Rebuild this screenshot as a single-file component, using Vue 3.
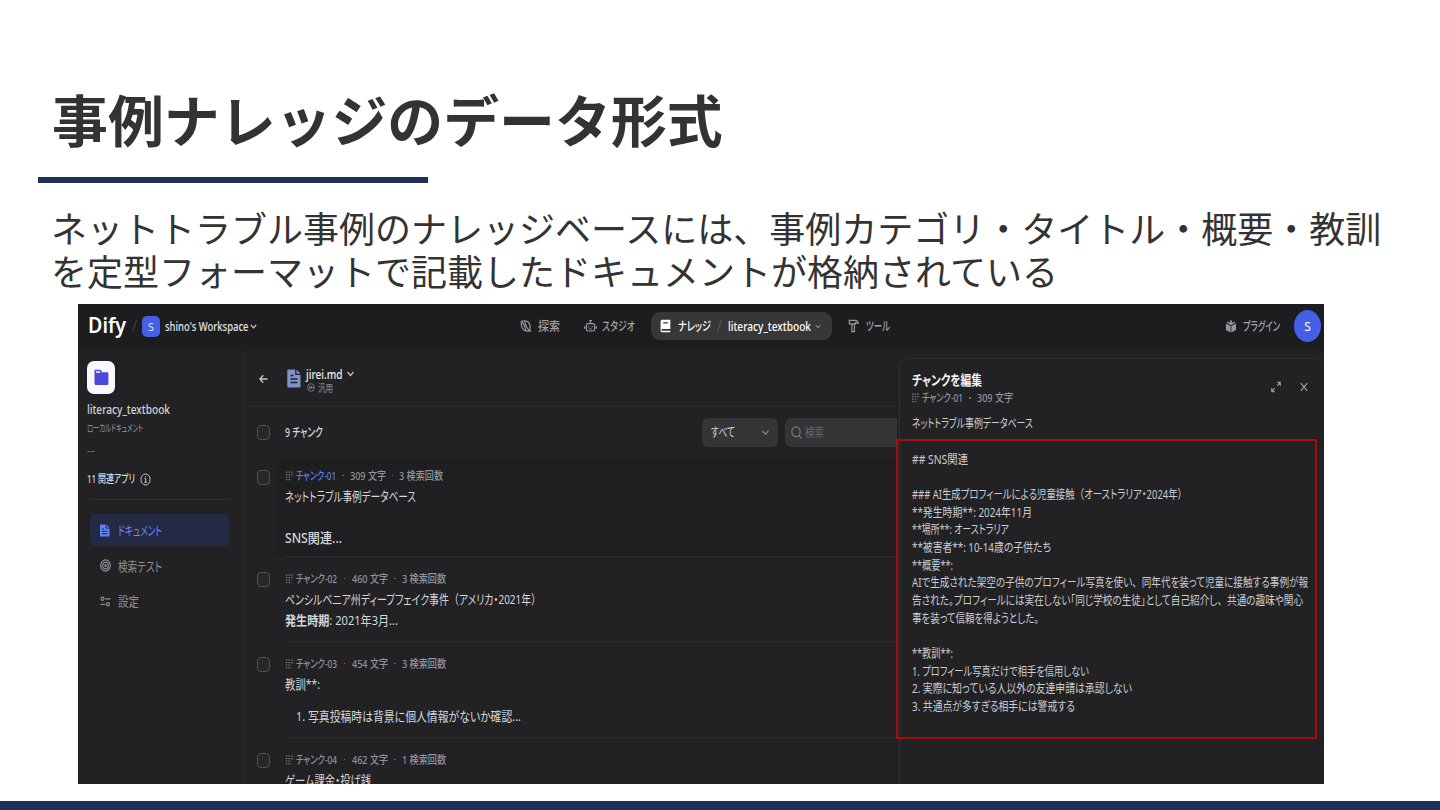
<script setup>
// Condenses a label horizontally so that it occupies exactly the given width.
const vW = {
  mounted(el, { value }) {
    const natural = el.getBoundingClientRect().width
    el.style.transform = `scaleX(${value / natural})`
    el.style.marginRight = `${value - natural}px`
  },
}

// Brackets and commas keep their full-width advance, kana are set proportionally.
const parts = (s) => s.split(/([（）、])/).filter(Boolean)
const isWide = (s) => /^[（）、]$/.test(s)

const chunks = [
  { id: 'チャンク-01', idW: 40, count: '309 文字', hits: '3 検索回数', kind: 'first', active: true },
  { id: 'チャンク-02', idW: 41, count: '460 文字', hits: '3 検索回数', kind: 'second' },
  { id: 'チャンク-03', idW: 41, count: '454 文字', hits: '3 検索回数', kind: 'third' },
  { id: 'チャンク-04', idW: 41, count: '462 文字', hits: '1 検索回数', kind: 'fourth' },
]

const pennsylvania = 'ペンシルベニア州ディープフェイク事件（アメリカ・2021年）'

const lines = [
  ['## SNS関連', 56],
  ['', 0],
  ['### AI生成プロフィールによる児童接触（オーストラリア・2024年）', 275],
  ['**発生時期**: 2024年11月', 120],
  ['**場所**: オーストラリア', 97],
  ['**被害者**: 10-14歳の子供たち', 139],
  ['**概要**:', 41],
  ['AIで生成された架空の子供のプロフィール写真を使い、同年代を装って児童に接触する事例が報', 396],
  ['告された。プロフィールには実在しない「同じ学校の生徒」として自己紹介し、共通の趣味や関心', 391],
  ['事を装って信頼を得ようとした。', 127],
  ['', 0],
  ['**教訓**:', 41],
  ['1. プロフィール写真だけで相手を信用しない', 177],
  ['2. 実際に知っている人以外の友達申請は承認しない', 220],
  ['3. 共通点が多すぎる相手には警戒する', 163],
]
</script>

<template>
  <div class="slide">
    <h1>事例ナレッジのデータ形式</h1>
    <div class="rule"></div>
    <p class="lead">ネットトラブル事例のナレッジベースには、事例カテゴリ・タイトル・概要・教訓<br />を定型フォーマットで記載したドキュメントが格納されている</p>

    <div class="app">
      <header>
        <div class="brand">
          <span v-w="38" class="t logo">Dify</span>
          <i class="slash"></i>
          <span class="ws">S</span>
          <span v-w="83.5" class="t wsname">shino's Workspace</span>
          <svg class="chev" width="7" height="5" viewBox="0 0 7 5"><path d="M.8.8 3.5 3.8 6.2.8" /></svg>
        </div>
        <nav>
          <svg class="ic" width="12" height="14" viewBox="0 0 12 14"><path d="M1.400 2.300c3-.9 6.600-.4 8 2.300 1 2 .7 5.200.3 7.400-3 .5-6.200-.6-7.400-3C1.300 7 1.200 4.500 1.400 2.300ZM1.400 2.300C4 5 5.500 8.500 5.700 11.500M4.800 2c.3 3.500 2.400 7.500 4.900 10H11.500" /></svg>
          <span v-w="22" class="t navt a">探索</span>
          <svg class="ic b" width="13" height="14" viewBox="0 0 13 14"><path d="M4 4.600h5c1 0 1.600.7 1.600 1.700v4c0 1-.6 1.700-1.600 1.700H4c-1 0-1.600-.7-1.600-1.700v-4c0-1 .6-1.700 1.600-1.700ZM6.500 4.600V1.500M5 1.500h3M.7 7.300v2.400M12.300 7.300v2.400M4.800 7.200v1.300M8.200 7.200v1.300M5.300 10h2.400" /></svg>
          <span v-w="33" class="t navt a">スタジオ</span>
          <div class="pill">
            <svg width="11" height="14" viewBox="0 0 11 14"><path fill="#fff" d="M2 .8h8.3v9.3H2.200a.8.8 0 0 0 0 1.600h8.100v1.500H2A1.700 1.700 0 0 1 .6 11.500V2.400C.6 1.400 1.200.8 2 .8Z" /><path d="M3.300 3.800h4.500" stroke="#37373a" stroke-width="1.300" /></svg>
            <span v-w="33" class="t k">ナレッジ</span>
            <i class="slash"></i>
            <span v-w="83" class="t">literacy_textbook</span>
            <svg class="chev dim" width="6" height="5" viewBox="0 0 7 5"><path d="M.8.8 3.500 3.800 6.200.8" /></svg>
          </div>
          <svg class="ic d" width="11" height="14" viewBox="0 0 11 14"><path d="M1.300 1.300H7c2 0 3 1 3.200 3.200L7.400 3.600v1.200H1.300ZM3.900 4.800h2.500v7.800H3.900Z" /></svg>
          <span v-w="24" class="t navt e">ツール</span>
        </nav>
        <div class="right">
          <svg width="12" height="15" viewBox="0 0 12 15"><path fill="#96979d" d="M1 4.500 5.600 7v6.500L1 10.900ZM11 4.500 6.400 7v6.500L11 10.900ZM1.500 3.600 3.200 2.600c.3 1.500 1.600 1.500 2 .2V1.400L6 1l.8.4v1.400c.5 1.300 1.700 1.200 2-.2l1.700 1L6 6.200Z" /></svg>
          <span v-w="37" class="t navt">プラグイン</span>
          <span class="avatar">S</span>
        </div>
      </header>

      <div class="body">
        <aside>
          <div class="folder">
            <svg width="15" height="17" viewBox="0 0 15 17"><path fill="#4a48d8" d="M.5 2C.5 1.200 1 .7 1.700.7h4.500c.6 0 .9.4 1.100 1l.6 1.600h5.200c.8 0 1.300.6 1.300 1.400v9.800c0 .9-.5 1.500-1.300 1.500H1.800c-.8 0-1.300-.6-1.300-1.500Z" /><path fill="#fff" d="M2 2.200h3.800l.7 1.600H2Z" /></svg>
          </div>
          <div class="kb"><span v-w="83" class="t">literacy_textbook</span></div>
          <div class="kind"><span v-w="56" class="t">ローカルドキュメント</span></div>
          <div class="dash"><span v-w="8" class="t">--</span></div>
          <div class="related">
            <span v-w="48" class="t">11 関連アプリ</span>
            <svg width="11" height="13" viewBox="0 0 11 13"><ellipse cx="5.500" cy="6.500" rx="4.600" ry="5.500" /><path d="M4.500 5.700h1.200v3.500M4.300 9.200h2.800M5.500 3.300v1.200" /></svg>
          </div>
          <hr />
          <div class="item on">
            <svg width="10" height="13" viewBox="0 0 10 13"><path fill="#5f81f7" d="M0 .5h5.500v4h4V12.500H0ZM6.500.5l3 3h-3Z" /><path d="M2 5h2M2 7.300h5.500M2 9.700h5.500" stroke="#232a48" stroke-width="1.100" /></svg>
            <span v-w="44" class="t">ドキュメント</span>
          </div>
          <div class="item">
            <svg width="11" height="13" viewBox="0 0 11 13"><g fill="none" stroke="#8b8c92" stroke-width="1.200"><ellipse cx="5.500" cy="6.500" rx="4.800" ry="5.600" /><ellipse cx="5.500" cy="6.500" rx="2.800" ry="3.300" /><ellipse cx="5.500" cy="6.500" rx=".8" ry="1" /></g></svg>
            <span v-w="44" class="t">検索テスト</span>
          </div>
          <div class="item">
            <svg width="11" height="11" viewBox="0 0 11 11"><g fill="none" stroke="#8b8c92" stroke-width="1.200"><ellipse cx="2.500" cy="2.800" rx="1.400" ry="1.600" /><path d="M5 2.800h5.500M.5 8.300h5" /><ellipse cx="8" cy="8.300" rx="1.400" ry="1.600" /></g></svg>
            <span v-w="21" class="t">設定</span>
          </div>
        </aside>

        <main>
          <div class="dochead">
            <svg class="back" width="9" height="10" viewBox="0 0 9 10"><path d="M8.500 5H1M4.200 1.300.9 5l3.300 3.700" /></svg>
            <svg class="doc" width="14" height="19" viewBox="0 0 14 19"><path fill="#7f92c9" d="M1.200.5h7v5.600h5.300v11.300c0 .7-.5 1.100-1 1.100H1.300c-.6 0-1-.5-1-1.100V1.600C.3.9.7.5 1.200.5ZM9.500.5l4 4.300h-4Z" /><path d="M3.500 6.500h3M3.500 10h7M3.500 13.500h7" stroke="#242528" stroke-width="1.500" /></svg>
            <div class="dn">
              <div class="dn1"><span v-w="36.5" class="t">jirei.md</span><svg class="chev" width="7" height="6" viewBox="0 0 7 6"><path d="M.6 1 3.500 4.600 6.400 1" /></svg></div>
              <div class="dn2"><svg width="8" height="9" viewBox="0 0 8 9"><ellipse cx="4" cy="4.500" rx="3.400" ry="3.900" /><path d="M2.700 2.700v3.600M2.700 4.500h4.600M4.700 2.800v3.400" /></svg><span v-w="15" class="t">汎用</span></div>
            </div>
          </div>

          <div class="tools">
            <i class="cb"></i>
            <span v-w="38" class="t total">9 チャンク</span>
            <div class="select"><span v-w="24" class="t">すべて</span><svg class="chev dim" width="7" height="6" viewBox="0 0 7 6"><path d="M.6 1 3.500 4.400 6.400 1" /></svg></div>
            <div class="search"><svg width="11" height="13" viewBox="0 0 11 13"><ellipse cx="5" cy="5.800" rx="4.200" ry="4.900" /><path d="m8 9.500 2.500 2.800" /></svg><span v-w="19" class="t">検索</span></div>
          </div>

          <section v-for="c in chunks" :key="c.id" class="chunk" :class="c.kind">
            <i class="cb"></i>
            <div class="cc">
              <div class="meta" :class="{ active: c.active }">
                <svg class="grip" width="8" height="10" viewBox="0 0 8 10"><path d="M0 1.200h8M0 3.700h8M0 6.200h5.500M0 8.700h5.500" /></svg>
                <span v-w="c.idW" class="t cid">{{ c.id }}</span><i class="dot"></i>
                <span v-w="36" class="t">{{ c.count }}</span><i class="dot"></i>
                <span v-w="44" class="t">{{ c.hits }}</span>
              </div>
              <template v-if="c.kind === 'first'">
                <div class="tx"><span v-w="131" class="t">ネットトラブル事例データベース</span></div>
                <div class="tx sns"><span v-w="57" class="t">SNS関連...</span></div>
              </template>
              <template v-else-if="c.kind === 'second'">
                <div class="tx"><span v-w="256" class="t"><span v-for="(p, k) in parts(pennsylvania)" :key="k" :class="{ wide: isWide(p) }">{{ p }}</span></span></div>
                <div class="tx"><span v-w="113" class="t"><b>発生時期</b>: 2021年3月...</span></div>
              </template>
              <template v-else-if="c.kind === 'third'">
                <div class="tx"><span v-w="35" class="t">教訓**:</span></div>
                <div class="tx ol"><span v-w="225" class="t">1. 写真投稿時は背景に個人情報がないか確認...</span></div>
              </template>
              <div v-else class="tx"><span v-w="86" class="t">ゲーム課金・投げ銭</span></div>
            </div>
          </section>
        </main>

        <div class="panel">
          <div class="phead">
            <div>
              <div class="ptitle"><span v-w="70" class="t">チャンクを編集</span></div>
              <div class="meta pm">
                <svg class="grip" width="8" height="10" viewBox="0 0 8 10"><path d="M0 1.200h8M0 3.700h8M0 6.200h5.500M0 8.700h5.500" /></svg>
                <span v-w="41" class="t cid">チャンク-01</span><i class="dot"></i><span v-w="36" class="t">309 文字</span>
              </div>
            </div>
            <div class="pact">
              <svg width="10" height="12" viewBox="0 0 10 12"><path d="M6 1.300h3.200v3.800M9.200 1.300 6.400 4.700M4 10.700H.8V6.900M.8 10.700 3.600 7.300" /></svg>
              <svg width="8" height="10" viewBox="0 0 8 10"><path d="m.8 1.200 6.400 7.600M7.200 1.200.8 8.800" /></svg>
            </div>
          </div>
          <div class="ptext intro"><span v-w="121" class="t">ネットトラブル事例データベース</span></div>
          <div class="marked">
            <div v-for="(l, i) in lines" :key="i" class="ptext"><span v-if="l[0]" v-w="l[1]" class="t"><span v-for="(p, k) in parts(l[0])" :key="k" :class="{ wide: isWide(p) }">{{ p }}</span></span></div>
          </div>
        </div>
      </div>
    </div>
    <div class="foot"></div>
  </div>
</template>

<style>
body { background: #fff; }
</style>

<style scoped>
* { box-sizing: border-box; }
.slide { width: 1440px; height: 810px; overflow: hidden; display: flex; flex-direction: column; background: #fff; color: #333; font-family: "Noto Sans CJK JP", sans-serif; }
h1 { margin: 78px 0 0 52px; height: 80px; font-size: 55.900px; line-height: 80px; font-weight: 700; white-space: nowrap; flex: none; }
.rule { width: 390px; height: 6px; margin: 19px 0 0 37.500px; background: #1f3058; flex: none; }
.lead { margin: 23px 0 0 51px; height: 98px; font-size: 36px; line-height: 43.200px; white-space: nowrap; flex: none; }
.foot { height: 9px; margin-top: 17px; background: #1f3058; flex: none; }

.app { width: 1246px; height: 480px; margin-left: 78px; flex: none; overflow: hidden; background: #222225; color: #d6d7da; font-family: "Noto Sans", "Noto Sans CJK JP", sans-serif; font-size: 12.500px; display: flex; flex-direction: column; }
.t { display: inline-block; flex: none; white-space: nowrap; transform-origin: 0 50%; font-feature-settings: "palt"; line-height: 18px; }
.wide { font-feature-settings: normal; }
svg { flex: none; display: block; fill: none; }
.chev path { stroke: #cfd0d4; stroke-width: 1.200; }
.chev.dim path { stroke: #85868c; }

header { height: 47px; flex: none; background: #1d1d20; display: flex; align-items: center; padding: 0 3px 3px 10px; }
header .t { position: relative; top: 1px; }
.brand { display: flex; align-items: center; width: 432px; }
header .logo { color: #fff; font-size: 21px; font-weight: 600; line-height: 24px; top: -1px; }
.slash { width: 1px; height: 12px; background: #47474c; transform: skewX(-18deg); flex: none; }
.brand .slash { margin: 0 7px 0 8px; }
.ws { width: 18px; height: 21px; border-radius: 5px; background: #4460e6; color: #dfe4ff; font-size: 11px; line-height: 21px; text-align: center; }
.wsname { margin-left: 4.500px; color: #e4e4e7; font-weight: 500; }
.brand .chev { margin-left: 2px; }
nav { display: flex; align-items: center; width: 705px; }
.ic path { stroke: #96979d; stroke-width: 1.200; }
.navt { color: #a0a1a7; font-weight: 500; }
.a { margin-left: 5.500px; }
.b { margin-left: 24px; }
.pill { margin-left: 16px; width: 181px; height: 28px; border-radius: 9px; background: #37373a; color: #fff; font-weight: 500; display: flex; align-items: center; padding-left: 9px; }
.k { margin-left: 7px; }
.pill .slash { margin: 0 8px; background: #5b5b60; }
.pill .chev { margin-left: 4px; }
.d { margin-left: 16px; }
.e { margin-left: 7px; }
.right { display: flex; align-items: center; }
.right .t { margin-left: 6px; }
.avatar { margin-left: 14px; width: 27px; height: 32px; border-radius: 50%; background: #4460e6; color: #fff; font-size: 12px; line-height: 33px; text-align: center; flex: none; }

.body { flex: 1; min-height: 0; display: flex; }
aside { width: 167px; flex: none; padding: 10px 15px 0 9px; border-right: 1px solid #29292c; }
.folder { width: 28px; height: 33px; border-radius: 7px; background: #f8f8ff; display: flex; align-items: center; justify-content: center; }
.kb, .kind, .dash { display: flex; align-items: center; height: 18px; }
.kb { margin-top: 7px; font-weight: 500; }
.kind { font-size: 10px; color: #96979d; height: 17px; }
.dash { font-size: 10px; color: #77787d; margin-top: 5px; }
.related { display: flex; align-items: center; gap: 5px; height: 20px; margin-top: 10px; font-size: 11.500px; font-weight: 500; }
.related svg { stroke: #c6c7cb; }
hr { border: 0; height: 1px; width: 140px; margin: 10px 0 14px 3px; background: #303034; }
.item { height: 32px; margin: 0 0 3.500px 3px; padding-left: 10px; border-radius: 6px; display: flex; align-items: center; color: #8f9096; font-size: 13px; }
.item svg { margin-right: 7px; }
.item.on { background: #252a44; color: #6a8bff; }
.item.on svg { margin-right: 8px; }

main { width: 652px; flex: none; overflow: hidden; }
.dochead { height: 56px; display: flex; align-items: center; padding-left: 14px; border-bottom: 1px solid #2b2b2e; }
.back path { stroke: #c8c9cd; stroke-width: 1.300; }
.doc { margin-left: 19px; }
.dn { margin-left: 5px; padding-top: 3px; }
.dn1 { display: flex; align-items: center; gap: 4.500px; height: 15px; color: #eeeef0; font-size: 13px; font-weight: 500; }
.dn2 { display: flex; align-items: center; gap: 2.500px; height: 12px; margin-left: 1px; color: #8f9096; font-size: 10px; }
.dn2 svg { stroke: #85868c; stroke-width: .8; }
.tools { height: 51px; display: flex; align-items: center; padding-left: 12px; }
.cb { width: 13px; height: 15px; flex: none; border: 1px solid #515155; border-radius: 4px; background: #28282b; }
.total { margin-left: 15px; font-weight: 500; }
.select { margin-left: 379px; width: 76px; height: 29px; border-radius: 6px; background: #353538; display: flex; align-items: center; justify-content: space-between; padding: 0 9px; flex: none; font-size: 12px; }
.search { margin-left: 7px; width: 130px; height: 29px; border-radius: 6px; background: #353538; display: flex; align-items: center; gap: 3px; padding-left: 6px; color: #66676c; flex: none; font-size: 12px; }
.search svg { stroke: #77787d; stroke-width: 1.200; }
.chunk { display: flex; padding-left: 12px; }
.chunk > .cb { margin-top: 15px; }
.cc { margin-left: 5px; padding: 12px 0 0 10px; flex: 1; position: relative; }
.cc::after { content: ""; position: absolute; left: 10px; right: 0; bottom: 0; height: 1px; background: #2b2b2e; }
.first { height: 99px; }
.first > .cb { margin-top: 12px; }
.first .cc { background: #1f1f22; border-radius: 8px 0 0 0; padding-top: 8px; }
.second { height: 85px; }
.third { height: 96px; }
.fourth { height: 90px; }
.meta { display: flex; align-items: center; height: 19px; font-size: 11.500px; color: #92939a; font-weight: 500; }
.grip { margin: 0 2px 0 1px; }
.grip path { stroke: #7f8086; stroke-width: 1.300; stroke-dasharray: 1.300 1.300; }
.active .cid { color: #5b7df5; }
.dot { width: 1.500px; height: 1.500px; margin: 0 6px; background: #67686d; flex: none; }
.second .dot, .third .dot, .fourth .dot { margin: 0 6.500px; }
.tx { display: flex; align-items: center; height: 21px; font-size: 13px; color: #d6d7da; }
.tx b { font-weight: 600; }
.sns { margin-top: 21px; font-size: 14px; font-weight: 500; }
.ol { margin: 11px 0 0 11px; }

.panel { flex: 1; min-width: 0; margin: 7px 0 0 2px; border: 1px solid #303036; border-right: 0; border-bottom: 0; border-radius: 9px 8px 0 0; background: #222225; }
.phead { display: flex; justify-content: space-between; height: 56px; padding: 12px 16px 0 12px; }
.ptitle { height: 18px; display: flex; align-items: center; font-size: 13.500px; font-weight: 600; color: #f5f5f7; }
.pm { height: 18px; }
.pm .grip { margin-left: 0; }
.pact { display: flex; align-items: center; gap: 19px; height: 32px; }
.pact path { stroke: #a4a5ab; stroke-width: 1.100; }
.ptext { height: 17.650px; display: flex; align-items: center; font-size: 12.500px; color: #cacbcf; }
.intro { height: 18px; padding-left: 12px; }
.marked { width: 420.500px; height: 300px; margin: 6px 0 0 -4px; padding: 10px 0 0 14px; border: 2px solid #a80c0e; position: relative; }
</style>
